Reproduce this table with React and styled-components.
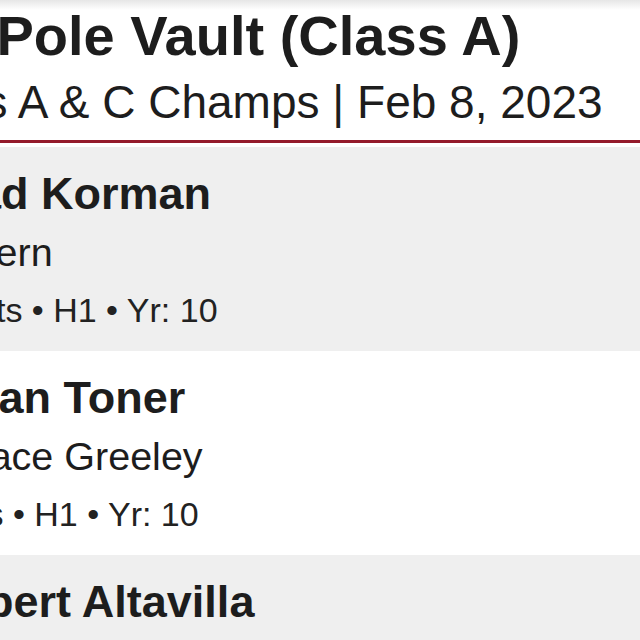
import React from 'react';
import styled, { createGlobalStyle } from 'styled-components';

const GlobalStyle = createGlobalStyle`
  html, body {
    margin: 0;
    padding: 0;
    background: #ffffff;
  }
  body {
    font-family: "Liberation Sans", Arial, Helvetica, sans-serif;
    color: #1d1d1d;
    overflow: hidden;
  }
`;

const Page = styled.div`
  width: 640px;
  height: 640px;
  overflow: hidden;
  background: linear-gradient(#e6e6e6, #ffffff 10px);
`;

// the screenshot is zoomed in, so the sheet starts left of the viewport
const Sheet = styled.div`
  margin-left: -156px;
  width: 796px;
`;

const Header = styled.header`
  padding: 4px 0 10px;
  border-bottom: 3px solid #941a2b;
  margin-bottom: 4px;
`;

const Title = styled.h1`
  margin: 0;
  font-size: 56px;
  line-height: 64px;
  font-weight: 700;
  white-space: nowrap;
`;

const Meet = styled.p`
  margin: 6px 0 0;
  font-size: 46px;
  line-height: 56px;
  font-weight: 400;
  white-space: nowrap;
`;

const List = styled.ul`
  list-style: none;
  margin: 0;
  padding: 0;
`;

const Row = styled.li`
  padding: 18px 0 12px 82px;
  background: ${({ $shaded }) => ($shaded ? '#efefef' : '#ffffff')};
`;

const Name = styled.div`
  font-size: 45px;
  line-height: 58px;
  font-weight: 700;
  white-space: nowrap;
`;

const School = styled.div`
  font-size: 39.5px;
  line-height: 58px;
  white-space: nowrap;
`;

const Details = styled.div`
  font-size: 34px;
  line-height: 58px;
  color: #222;
  white-space: nowrap;
`;

const athletes = [
  { name: 'Brad Korman', school: 'Suffern', pts: 10, heat: 'H1', yr: 10 },
  { name: 'Ethan Toner', school: 'Horace Greeley', pts: 8, heat: 'H1', yr: 10 },
  { name: 'Robert Altavilla', school: 'Arlington', pts: 6, heat: 'H1', yr: 11 },
];

function App() {
  return (
    <Page>
      <GlobalStyle />
      <Sheet>
        <Header>
          <Title>Boys Pole Vault (Class A)</Title>
          <Meet>Classes A &amp; C Champs | Feb 8, 2023</Meet>
        </Header>
        <List>
          {athletes.map((a, i) => (
            <Row key={a.name} $shaded={i % 2 === 0}>
              <Name>{a.name}</Name>
              <School>{a.school}</School>
              <Details>
                {a.pts} Pts • {a.heat} • Yr: {a.yr}
              </Details>
            </Row>
          ))}
        </List>
      </Sheet>
    </Page>
  );
}

export default App;
